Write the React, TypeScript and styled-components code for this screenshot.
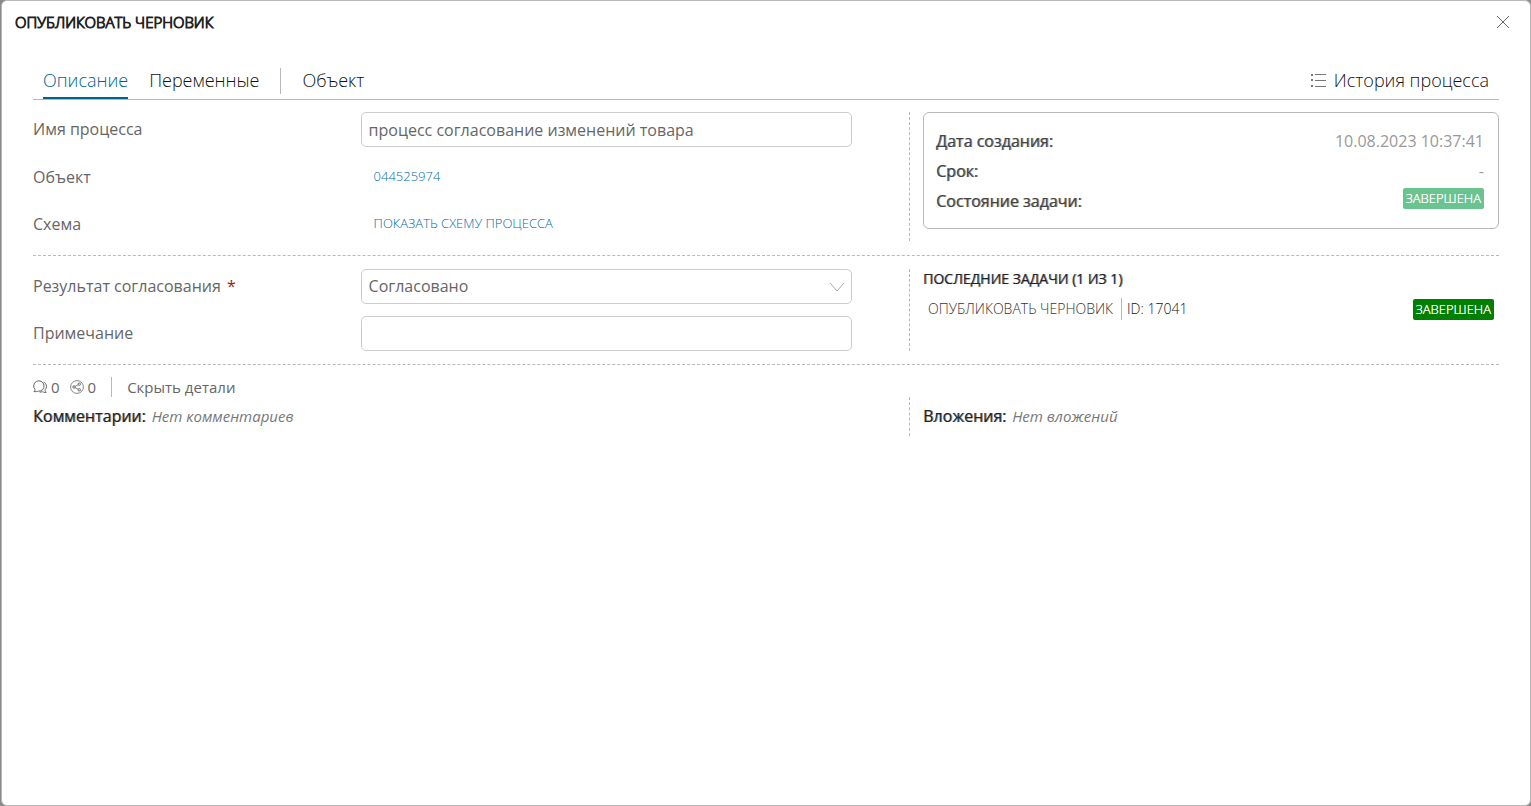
import React from "react";
import styled, { createGlobalStyle, css } from "styled-components";

const GlobalStyle = createGlobalStyle`
  * { box-sizing: border-box; }
  html, body, #root { height: 100%; }
  body {
    margin: 0;
    background: #8a8a8a;
    color: #666;
    font: 16px/24px "Open Sans", "Noto Sans", sans-serif;
  }
  button, input, select { font: inherit; color: inherit; }
`;

const emphasis = css`
  font-weight: 400;
  text-shadow: 1px 0 0 rgba(34, 34, 34, 0.5);
`;

const Backdrop = styled.div`
  min-height: 100%;
  display: flex;
  padding-left: 1px;
`;

const Dialog = styled.section`
  flex: 1;
  min-width: 0;
  background: #fff;
  border: 1px solid #b8b8b8;
  border-radius: 6px;
`;

const DialogHeader = styled.header`
  display: flex;
  align-items: center;
  justify-content: space-between;
  height: 42px;
  padding: 0 20px 0 13px;
`;

const Title = styled.h1`
  margin: 0;
  color: #222;
  font-size: 15px;
  font-weight: 300;
  -webkit-text-stroke: 1px #222;
  text-transform: uppercase;
`;

const PlainButton = styled.button`
  display: inline-flex;
  align-items: center;
  padding: 0;
  border: 0;
  background: none;
  cursor: pointer;
`;

const Content = styled.div`
  padding: 20px 31px;
`;

const TabBar = styled.nav`
  display: flex;
  align-items: stretch;
  height: 37px;
  padding: 0 10px;
  border-bottom: 1px solid #b8b8b8;
`;

const Tab = styled(PlainButton)<{ $active?: boolean }>`
  margin-right: 21px;
  border-bottom: 2px solid ${(p) => (p.$active ? "#00608f" : "transparent")};
  color: ${(p) => (p.$active ? "#005f94" : "#111")};
  font-size: 18px;
  font-weight: 300;
`;

const TabDivider = styled.span`
  align-self: center;
  width: 1px;
  height: 26px;
  margin-right: 21px;
  background: #b8b8b8;
`;

const HistoryButton = styled(PlainButton)`
  gap: 7px;
  margin-left: auto;
  border-bottom: 2px solid transparent;
  color: #111;
  font-size: 18px;
  font-weight: 300;
`;

const Section = styled.div<{ $first?: boolean }>`
  display: grid;
  grid-template-columns: minmax(0, 49fr) minmax(0, 33fr);
  padding: ${(p) => (p.$first ? "12px 0 14px" : "13px 0")};
  border-bottom: 1px dashed #b8b8b8;
`;

const Fields = styled.div`
  display: grid;
  grid-template-columns: minmax(0, 2fr) minmax(0, 3fr);
  grid-auto-rows: 35px;
  row-gap: 12px;
  align-items: center;
  padding-right: 57px;
`;

const Label = styled.label`
  padding-bottom: 2px;
  color: #666;
`;

const Required = styled.span`
  margin-left: 2px;
  color: #a01818;
`;

const TextInput = styled.input`
  width: 100%;
  height: 35px;
  padding: 0 7px;
  border: 1px solid #ccc;
  border-radius: 5px;
  background: #fff;
`;

const SelectWrap = styled.div`
  position: relative;
  svg {
    position: absolute;
    top: 12px;
    right: 7px;
    pointer-events: none;
  }
`;

const Select = styled.select`
  width: 100%;
  height: 35px;
  padding: 0 32px 2px 7px;
  border: 1px solid #ccc;
  border-radius: 5px;
  background: #fff;
  appearance: none;
`;

const FieldLink = styled.a`
  padding: 0 0 2px 13px;
  color: #006ca8;
  font-size: 13px;
  font-weight: 300;
  text-decoration: none;
`;

const Side = styled.div`
  padding-left: 13px;
  border-left: 1px dashed #b8b8b8;
`;

const InfoCard = styled.dl`
  margin: 0;
  height: 117px;
  padding: 13px 14px 13px 12px;
  border: 1px solid #b8b8b8;
  border-radius: 6px;
`;

const InfoRow = styled.div`
  display: flex;
  justify-content: space-between;
  line-height: 30px;
  dt { color: #444; ${emphasis} }
  dd { margin: 0; color: #999; }
`;

const Badge = styled.span<{ $solid?: boolean }>`
  display: block;
  height: 21px;
  margin-top: 2px;
  padding: 0 3px;
  border-radius: 2px;
  background: ${(p) => (p.$solid ? "#008000" : "#69c490")};
  color: #fff;
  font-size: 13px;
  font-weight: 300;
  line-height: 21px;
  text-shadow: 0 0 0 #fff;
`;

const TasksTitle = styled.h2`
  margin: 0;
  color: #222;
  font-size: 14px;
  ${emphasis}
  line-height: 20px;
`;

const TaskRow = styled.div`
  display: flex;
  align-items: center;
  margin-top: 8px;
  padding: 0 5px;
  color: #111;
  font-size: 14px;
  font-weight: 300;
  line-height: 22px;
`;

const TaskName = styled.span`
  margin-right: 5px;
  padding-right: 8px;
  border-right: 1px solid #b8b8b8;
  color: #333;
`;

const TaskStatus = styled.div`
  margin-left: auto;
`;

const Toolbar = styled.div`
  display: flex;
  align-items: center;
  height: 20px;
  margin-top: 12px;
  font-size: 15px;
  line-height: 20px;
`;

const Counter = styled(PlainButton)`
  gap: 4px;
  margin-right: 10px;
`;

const DetailsToggle = styled(PlainButton)`
  height: 20px;
  margin-left: 5px;
  padding-left: 15px;
  border-left: 1px solid #b8b8b8;
`;

const Details = styled.div`
  display: grid;
  grid-template-columns: minmax(0, 49fr) minmax(0, 33fr);
  font-size: 15px;
  line-height: 39px;
  strong { margin-right: 2px; color: #222; font-size: 16px; ${emphasis} }
  em { color: #777; }
`;

export default function App() {
  return (
    <>
      <GlobalStyle />
      <Backdrop>
        <Dialog role="dialog" aria-labelledby="dialog-title">
          <DialogHeader>
            <Title id="dialog-title">Опубликовать черновик</Title>
            <PlainButton aria-label="Закрыть">
              <svg width="14" height="14" viewBox="0 0 14 14" stroke="#666" fill="none">
                <path d="M1 1l12 12M13 1L1 13" />
              </svg>
            </PlainButton>
          </DialogHeader>
          <Content>
            <TabBar>
              <Tab $active>Описание</Tab>
              <Tab>Переменные</Tab>
              <TabDivider />
              <Tab>Объект</Tab>
              <HistoryButton>
                <svg width="16" height="14" viewBox="0 0 16 14" fill="#777" shapeRendering="crispEdges">
                  <path d="M0 1h2v2H0zM4 1h11v1H4zM0 6h2v2H0zM4 7h11v1H4zM0 12h2v2H0zM4 13h11v1H4z" />
                </svg>
                История процесса
              </HistoryButton>
            </TabBar>

            <Section $first>
              <Fields>
                <Label htmlFor="process-name">Имя процесса</Label>
                <TextInput id="process-name" defaultValue="процесс согласование изменений товара" />
                <span>Объект</span>
                <FieldLink href="#object">044525974</FieldLink>
                <span>Схема</span>
                <FieldLink href="#scheme">ПОКАЗАТЬ СХЕМУ ПРОЦЕССА</FieldLink>
              </Fields>
              <Side>
                <InfoCard>
                  <InfoRow><dt>Дата создания:</dt><dd>10.08.2023 10:37:41</dd></InfoRow>
                  <InfoRow><dt>Срок:</dt><dd>-</dd></InfoRow>
                  <InfoRow><dt>Состояние задачи:</dt><dd><Badge>ЗАВЕРШЕНА</Badge></dd></InfoRow>
                </InfoCard>
              </Side>
            </Section>

            <Section>
              <Fields>
                <Label htmlFor="result">Результат согласования <Required>*</Required></Label>
                <SelectWrap>
                  <Select id="result" defaultValue="ok">
                    <option value="ok">Согласовано</option>
                  </Select>
                  <svg width="16" height="12" viewBox="0 0 16 12" stroke="#aaa" fill="none">
                    <path d="M1 2l7 8 7-8" />
                  </svg>
                </SelectWrap>
                <Label htmlFor="note">Примечание</Label>
                <TextInput id="note" />
              </Fields>
              <Side>
                <TasksTitle>ПОСЛЕДНИЕ ЗАДАЧИ (1 ИЗ 1)</TasksTitle>
                <TaskRow>
                  <TaskName>ОПУБЛИКОВАТЬ ЧЕРНОВИК</TaskName>
                  <span>ID: 17041</span>
                  <TaskStatus><Badge $solid>ЗАВЕРШЕНА</Badge></TaskStatus>
                </TaskRow>
              </Side>
            </Section>

            <Toolbar>
              <Counter aria-label="Комментарии: 0">
                <svg width="14" height="14" viewBox="0 0 14 14" stroke="#666" fill="none">
                  <path d="M2 9.500A5.200 5.200 0 1 1 5.500 11.200C4.300 11.300 2.500 12 .8 11.500 1.800 11 2.200 10.300 2 9.500z" />
                  <path d="M10.500 2c1.900.9 3 2.400 3 4.300 0 1.500-.6 2.700-1.400 3.500-.1 1 .3 1.800 1.200 2.500-1.700.4-3-.1-3.800-.6-1 .4-2 .5-3 .3" />
                </svg>
                0
              </Counter>
              <Counter aria-label="Вложения: 0">
                <svg width="14" height="14" viewBox="0 0 14 14" stroke="#666" fill="none">
                  <circle cx="7" cy="7" r="6.400" strokeWidth=".8" />
                  <circle cx="4" cy="7" r="1.200" />
                  <circle cx="9.300" cy="4.200" r="1.200" />
                  <circle cx="9.300" cy="9.800" r="1.200" />
                  <path d="M5 6.400l3.300-1.700M5 7.600l3.300 1.700" strokeWidth=".8" />
                </svg>
                0
              </Counter>
              <DetailsToggle>Скрыть детали</DetailsToggle>
            </Toolbar>
            <Details>
              <div><strong>Комментарии:</strong> <em>Нет комментариев</em></div>
              <Side><strong>Вложения:</strong> <em>Нет вложений</em></Side>
            </Details>
          </Content>
        </Dialog>
      </Backdrop>
    </>
  );
}
